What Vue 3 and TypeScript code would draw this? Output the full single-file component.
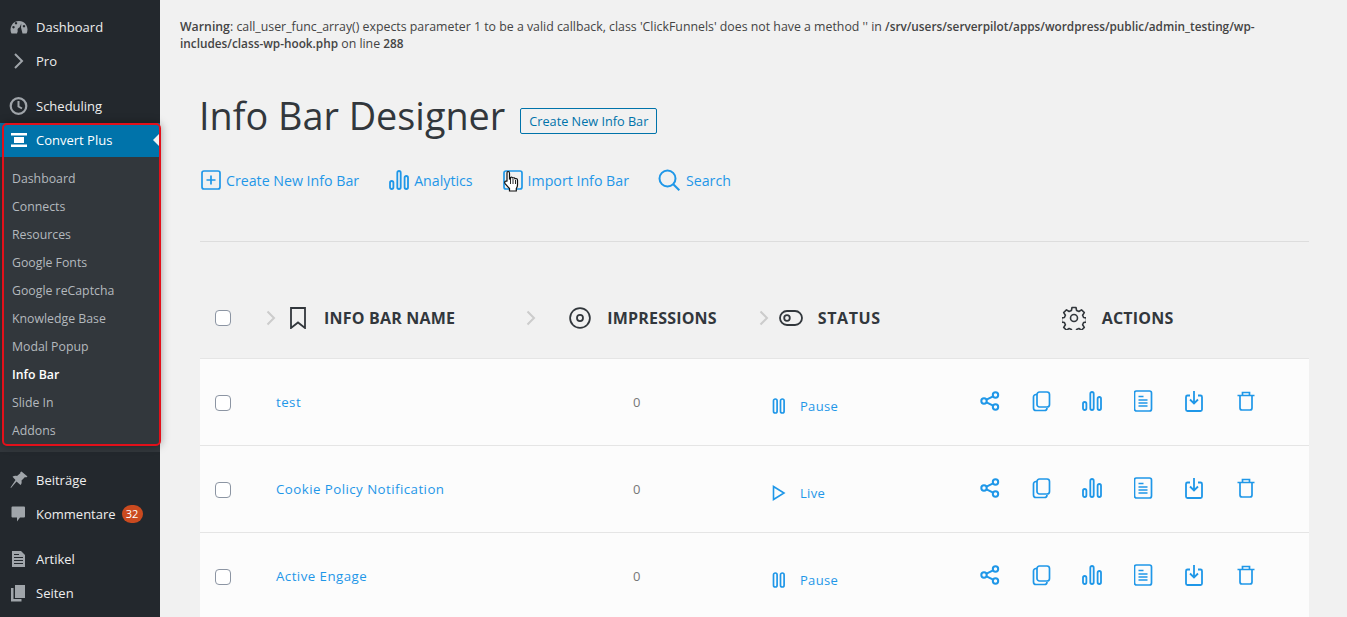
<template>
  <div class="page">
    <svg class="sprites" width="0" height="0">
      <symbol id="i-share" viewBox="0 0 20 20"><g fill="none" stroke="currentColor" stroke-width="2"><circle cx="4" cy="10" r="2.7"/><circle cx="15.5" cy="4" r="2.7"/><circle cx="15.5" cy="16" r="2.7"/><path d="M6.5 8.7l6.6-3.4M6.5 11.3l6.6 3.4"/></g></symbol>
      <symbol id="i-copy" viewBox="0 0 20 22"><g fill="none" stroke="currentColor" stroke-width="1.7"><rect x="6" y="2" width="12.5" height="15" rx="2.5"/><path d="M6 4.500H5A2.500 2.500 0 0 0 2.500 7V18A2.500 2.500 0 0 0 5 20.500H13.500a2.500 2.500 0 0 0 2.500-2.500"/></g></symbol>
      <symbol id="i-bars" viewBox="0 0 20 20"><g fill="none" stroke="currentColor" stroke-width="1.8"><rect x="1" y="11" width="3.400" height="8" rx="1.700"/><rect x="8.300" y="1" width="3.400" height="18" rx="1.700"/><rect x="15.600" y="6" width="3.400" height="13" rx="1.700"/></g></symbol>
      <symbol id="i-doc" viewBox="0 0 20 22"><g fill="none" stroke="currentColor" stroke-width="1.700"><rect x="0.500" y="1" width="17" height="20" rx="2"/><path d="M4.500 6.500h5M4.500 10h9M4.500 13h9M4.500 16h9"/></g></symbol>
      <symbol id="i-down" viewBox="0 0 20 22"><g fill="none" stroke="currentColor" stroke-width="1.800"><path d="M5 5.500H2.500A1.500 1.500 0 0 0 1 7v12.500A1.500 1.500 0 0 0 2.500 21h13a1.500 1.500 0 0 0 1.500-1.500V7a1.500 1.500 0 0 0-1.500-1.500H13"/><path d="M9 1v12M5 9.500l4 4 4-4"/></g></symbol>
      <symbol id="i-trash" viewBox="0 0 20 20"><g fill="none" stroke="currentColor" stroke-width="1.700"><path d="M1.500 4.500h17M6.500 4.500V1.500h7v3"/><path d="M4 4.500V17a2 2 0 0 0 2 2h8a2 2 0 0 0 2-2V4.500"/></g></symbol>
      <symbol id="i-pause" viewBox="0 0 14 16"><g fill="none" stroke="currentColor" stroke-width="1.700"><rect x="1.500" y="1" width="3.600" height="14" rx="1.800"/><rect x="8.500" y="1" width="3.600" height="14" rx="1.800"/></g></symbol>
      <symbol id="i-play" viewBox="0 0 14 16"><path d="M1.500 1.500v13L12 8z" fill="none" stroke="currentColor" stroke-width="1.600"/></symbol>
      <symbol id="i-chev" viewBox="0 0 10 16"><path d="M1.500 1.500L8 8l-6.500 6.500" fill="none" stroke="currentColor" stroke-width="2"/></symbol>
    </svg>

    <aside class="sidebar">
      <ul class="menu">
        <li v-for="item in topMenu" :key="item.label" class="menu-item" :class="item.cls">
          <svg class="menu-icon" viewBox="0 0 20 20" v-html="item.icon"></svg>
          <span>{{ item.label }}</span>
          <span v-if="item.badge" class="badge">{{ item.badge }}</span>
        </li>
      </ul>
      <div class="current">
        <svg class="menu-icon white" viewBox="0 0 20 20"><path d="M2 3h16v2.500H2zM5 7h10v6H5zM2 14.500h16V17H2z" fill="currentColor"/></svg>
        <span>Convert Plus</span>
      </div>
      <ul class="submenu">
        <li v-for="sub in subMenu" :key="sub" :class="{ on: sub === 'Info Bar' }">{{ sub }}</li>
      </ul>
      <ul class="menu lower">
        <li v-for="item in lowerMenu" :key="item.label" class="menu-item" :class="item.cls">
          <svg class="menu-icon" viewBox="0 0 20 20" v-html="item.icon"></svg>
          <span>{{ item.label }}</span>
          <span v-if="item.badge" class="badge">{{ item.badge }}</span>
        </li>
      </ul>
      <div class="highlight"></div>
    </aside>

    <main class="content">
      <p class="warning"><b class="w-label">Warning</b>: call_user_func_array() expects parameter 1 to be a valid callback, class 'ClickFunnels' does not have a method '' in <b>/srv/users/serverpilot/apps/wordpress/public/admin_testing/wp-includes/class-wp-hook.php</b> on line <b>288</b></p>

      <div class="wrap">
        <div class="title-row">
          <h1>Info Bar Designer</h1>
          <a class="title-btn">Create New Info Bar</a>
        </div>

        <nav class="tabs">
          <a class="tab first">
            <svg class="tab-icon" viewBox="0 0 20 20"><g fill="none" stroke="currentColor" stroke-width="1.700"><rect x="1" y="1" width="18" height="18" rx="2"/><path d="M10 5.500v9M5.500 10h9"/></g></svg>
            Create New Info Bar
          </a>
          <a class="tab second">
            <svg class="tab-icon bars"><use href="#i-bars"/></svg>
            Analytics
          </a>
          <a class="tab third">
            <span class="cursor-wrap">
              <svg class="tab-icon" viewBox="0 0 20 20"><rect x="1" y="1" width="18" height="18" rx="2" fill="none" stroke="currentColor" stroke-width="1.700"/></svg>
              <svg class="cursor" viewBox="0 0 18 22"><path d="M5 1.500c1 0 1.500.7 1.500 1.700V9l1-.3V7.500c1-.6 2-.3 2.300.5 1-.5 2-.2 2.300.7 1.200-.4 2.400.3 2.400 1.500v4.800c0 1.500-.5 2.500-1.200 3.500v2.500H6.500V18.500L2.300 13.800c-.8-1-.6-2 0-2.500.7-.5 1.500-.2 1.700.2V3.200c0-1 .3-1.700 1-1.700z" fill="#fff" stroke="#111" stroke-width="1.200"/><path d="M7.500 9v5M10 9v5M12.500 10v4" stroke="#111" stroke-width=".9"/></svg>
            </span>
            Import Info Bar
          </a>
          <a class="tab fourth">
            <svg class="tab-icon search" viewBox="0 0 22 22"><g fill="none" stroke="currentColor" stroke-width="2"><circle cx="9.500" cy="9.500" r="8"/><path d="M15.300 15.300l6 6"/></g></svg>
            Search
          </a>
        </nav>

        <hr class="rule" />

        <div class="table-head">
          <span class="box"></span>
          <svg class="chev c1"><use href="#i-chev"/></svg>
          <svg class="head-icon bookmark" viewBox="0 0 16 22"><path d="M1 1h14v20l-7-5.500L1 21z" fill="none" stroke="currentColor" stroke-width="1.800"/></svg>
          <span class="head-label l1">INFO BAR NAME</span>
          <svg class="chev c2"><use href="#i-chev"/></svg>
          <svg class="head-icon ring" viewBox="0 0 24 24"><g fill="none" stroke="currentColor" stroke-width="1.900"><circle cx="12" cy="12" r="10.800"/><circle cx="12" cy="12" r="3.300"/></g></svg>
          <span class="head-label l2">IMPRESSIONS</span>
          <svg class="chev c3"><use href="#i-chev"/></svg>
          <svg class="head-icon toggle" viewBox="0 0 24 16"><g fill="none" stroke="currentColor" stroke-width="1.800"><rect x="1" y="1" width="22" height="14" rx="7"/><circle cx="8" cy="8" r="2.800"/></g></svg>
          <span class="head-label l3">STATUS</span>
          <svg class="head-icon gear" viewBox="0 0 24 24"><g fill="none" stroke="currentColor" stroke-width="1.600" stroke-linejoin="round"><circle cx="12" cy="12" r="3.500"/><path d="M10 1.500h4l.6 3 2.300 1 2.600-1.700 2.800 2.800-1.700 2.600 1 2.300 2.900.5v4l-2.900.5-1 2.300 1.700 2.600-2.800 2.800-2.600-1.700-2.300 1-.6 3h-4l-.6-3-2.300-1-2.600 1.700-2.800-2.800 1.700-2.600-1-2.300-2.900-.5v-4l2.900-.5 1-2.300-1.700-2.600 2.800-2.800 2.600 1.700 2.300-1z"/></g></svg>
          <span class="head-label l4">ACTIONS</span>
        </div>

        <div v-for="row in rows" :key="row.name" class="row">
          <span class="box"></span>
          <a class="row-name">{{ row.name }}</a>
          <span class="row-count">0</span>
          <span class="row-status">
            <svg class="status-icon"><use :href="row.live ? '#i-play' : '#i-pause'"/></svg>
            {{ row.live ? 'Live' : 'Pause' }}
          </span>
          <span class="row-actions">
            <svg v-for="a in actions" :key="a" class="action"><use :href="'#i-' + a"/></svg>
          </span>
        </div>
      </div>
    </main>
  </div>
</template>

<script setup lang="ts">
interface MenuItem {
  label: string;
  icon: string;
  cls?: string;
  badge?: string;
}

const topMenu: MenuItem[] = [
  {
    label: 'Dashboard',
    icon: '<path fill="currentColor" fill-rule="evenodd" d="M2.500 16.500A8.500 8.500 0 1 1 17.500 16.500H13.500L12 10.500l.3-4-1.800 4A2.500 2.500 0 0 0 8.800 14L8 16.500zM4.500 9a1.200 1.200 0 1 0 .01 0zM7 5a1.200 1.200 0 1 0 .01 0zM15 8a1.200 1.200 0 1 0 .01 0z"/>',
  },
  {
    label: 'Pro',
    cls: 'gap',
    icon: '<path fill="none" stroke="currentColor" stroke-width="2" d="M6 3l7 7-7 7"/>',
  },
  {
    label: 'Scheduling',
    icon: '<circle cx="9.500" cy="10" r="7.800" fill="none" stroke="currentColor" stroke-width="2.200"/><path fill="none" stroke="currentColor" stroke-width="2" d="M9.500 5v5.500l3.500 2"/>',
  },
];

const subMenu: string[] = [
  'Dashboard',
  'Connects',
  'Resources',
  'Google Fonts',
  'Google reCaptcha',
  'Knowledge Base',
  'Modal Popup',
  'Info Bar',
  'Slide In',
  'Addons',
];

const lowerMenu: MenuItem[] = [
  {
    label: 'Beiträge',
    icon: '<path fill="currentColor" d="M12.500 1.500l6 5-1.500 1-1-.5-3.500 3.500c.5 2 0 3.500-1 4.500L7.500 11.500 2 18l-.5-.5L6.500 10 3.500 6.800c1.200-1 2.800-1.300 4.500-.8L11.500 3l-.3-.7z"/>',
  },
  {
    label: 'Kommentare',
    cls: 'gap',
    badge: '32',
    icon: '<path fill="currentColor" d="M3.500 2.500h11.500a1 1 0 0 1 1 1v9a1 1 0 0 1-1 1h-4l-3 4v-4H3.500a1 1 0 0 1-1-1v-9a1 1 0 0 1 1-1z"/>',
  },
  {
    label: 'Artikel',
    icon: '<path fill="currentColor" fill-rule="evenodd" d="M3 2h9l4 4v12H3zM5 5v1h5V5zM5 8v1h9V8zM5 11v1h9v-1zM5 14v1h9v-1z"/>',
  },
  {
    label: 'Seiten',
    icon: '<path fill="currentColor" d="M6 2h10v13H6zM2 5h2.500v11h8v2.500H2z"/>',
  },
];

const rows = [
  { name: 'test', live: false },
  { name: 'Cookie Policy Notification', live: true },
  { name: 'Active Engage', live: false },
];

const actions: string[] = ['share', 'copy', 'bars', 'doc', 'down', 'trash'];
</script>

<style>
html,
body {
  margin: 0;
  height: 617px;
  overflow: hidden;
  background: #f1f1f1;
}
</style>

<style scoped>
.page {
  display: flex;
  height: 617px;
  overflow: hidden;
  font-family: "Open Sans", "Liberation Sans", sans-serif;
  color: #444;
  background: #f1f1f1;
}

.sprites {
  position: absolute;
}

.sidebar {
  position: relative;
  flex: 0 0 160px;
  background: #23282d;
  color: #eee;
  font-size: 13px;
}

.menu,
.submenu {
  list-style: none;
  margin: 0;
  padding: 0;
}

.menu {
  padding-top: 10px;
}

.menu.lower {
  padding-top: 11px;
}

.menu-item {
  display: flex;
  align-items: center;
  height: 34px;
  padding-left: 9px;
}

.menu-item.gap {
  margin-bottom: 11px;
}

.menu-icon {
  width: 20px;
  height: 20px;
  margin-right: 7px;
  color: #a0a5aa;
  flex: none;
}

.menu-icon.white {
  color: #fff;
}

.badge {
  margin-left: 6px;
  width: 21px;
  height: 18px;
  border-radius: 9px;
  background: #ca4a1f;
  color: #fff;
  font-size: 11px;
  line-height: 18px;
  text-align: center;
}

.current {
  position: relative;
  display: flex;
  align-items: center;
  height: 34px;
  padding-left: 9px;
  background: #0073aa;
  color: #fff;
  font-size: 13px;
}

.current::after {
  content: "";
  position: absolute;
  right: 0;
  top: 10px;
  border: 7px solid transparent;
  border-left: 0;
  border-right-color: #f1f1f1;
}

.submenu {
  background: #32373c;
  padding: 8px 0 7px;
  height: 280px;
  box-sizing: content-box;
  color: #b4b9be;
  font-size: 12.300px;
}

.submenu li {
  height: 28px;
  line-height: 28px;
  padding-left: 12px;
}

.submenu li.on {
  color: #fff;
  font-weight: 600;
}

.highlight {
  position: absolute;
  left: 2px;
  top: 123px;
  width: 155px;
  height: 319px;
  border: 2px solid #e3101a;
  border-radius: 5px;
  box-shadow: 0 0 8px rgba(0, 0, 0, 0.35);
}

.content {
  flex: 1;
  min-width: 0;
  padding: 18px 38px 0 20px;
}

.warning {
  margin: 0;
  font-size: 12.330px;
  line-height: 17px;
  color: #444;
}

.warning b {
  font-size: 11.800px;
  font-weight: 600;
}

.warning .w-label {
  font-size: 12.300px;
}

.wrap {
  margin-left: 19px;
}

.title-row {
  display: flex;
  align-items: center;
  margin-top: 34px;
  height: 60px;
}

h1 {
  margin: 0;
  font-size: 37.800px;
  font-weight: 400;
  color: #32373c;
  line-height: 60px;
}

.title-btn {
  margin: 10px 0 0 15px;
  height: 24px;
  padding: 0 8px;
  line-height: 24px;
  font-size: 12.700px;
  color: #0073aa;
  border: 1px solid #0073aa;
  border-radius: 2px;
}

.tabs {
  display: flex;
  align-items: center;
  margin-top: 19px;
  height: 30px;
}

.tab {
  display: flex;
  align-items: center;
  gap: 5px;
  font-size: 14.200px;
  color: #1f97e8;
}

.tab.first {
  margin-left: 2px;
}

.tab.second {
  margin-left: 30px;
}

.tab.third {
  margin-left: 30px;
}

.tab.fourth {
  margin-left: 29px;
  gap: 6px;
}

.tab-icon {
  width: 20px;
  height: 20px;
  flex: none;
}

.tab-icon.search {
  width: 22px;
  height: 22px;
}

.cursor-wrap {
  position: relative;
  display: flex;
}

.cursor {
  position: absolute;
  left: 0;
  top: 0;
  width: 18px;
  height: 22px;
}

.rule {
  margin: 46px 0 0 1px;
  border: 0;
  border-top: 1px solid #ddd;
}

.table-head {
  display: flex;
  align-items: center;
  height: 117px;
  margin-left: 1px;
  padding: 35px 0 0 15px;
  border-bottom: 1px solid #e5e5e5;
  box-sizing: border-box;
  color: #32373c;
}

.box {
  flex: none;
  width: 14px;
  height: 14px;
  background: #fff;
  border: 1px solid #8c95a3;
  border-radius: 4px;
}

.chev {
  flex: none;
  width: 10px;
  height: 16px;
  color: #ccc;
}

.c1 {
  margin-left: 35px;
}

.c2 {
  margin-left: 71px;
}

.c3 {
  margin-left: 42px;
}

.head-icon {
  flex: none;
}

.bookmark {
  width: 16px;
  height: 22px;
  margin-left: 14px;
}

.ring {
  width: 22px;
  height: 22px;
  margin-left: 33px;
}

.toggle {
  width: 24px;
  height: 16px;
  margin-left: 10px;
}

.gear {
  width: 24px;
  height: 24px;
  margin-left: 181px;
}

.head-label {
  flex: none;
  font-size: 16px;
  font-weight: 700;
  letter-spacing: 0.2px;
}

.l1 {
  margin-left: 18px;
}

.l2 {
  margin-left: 16px;
}

.l3 {
  margin-left: 15px;
  letter-spacing: 0.6px;
}

.l4 {
  margin-left: 16px;
}

.row {
  display: flex;
  align-items: center;
  height: 87px;
  margin-left: 1px;
  padding-left: 15px;
  box-sizing: border-box;
  background: #fcfcfc;
  border-bottom: 1px solid #e5e5e5;
  font-size: 13px;
  letter-spacing: 0.4px;
}

.row .box {
  margin-top: 2px;
}

.row-name {
  flex: none;
  width: 357px;
  margin-left: 45px;
  font-size: 13.300px;
  letter-spacing: 0.45px;
  color: #1f97e8;
}

.row-count {
  flex: none;
  width: 10px;
  color: #777;
}

.row-status {
  flex: none;
  display: flex;
  align-items: center;
  gap: 14px;
  width: 208px;
  margin-left: 129px;
  padding-top: 8px;
  letter-spacing: 0.3px;
  color: #1f97e8;
}

.status-icon {
  width: 14px;
  height: 16px;
  flex: none;
}

.row-actions {
  display: flex;
  gap: 31.200px;
  color: #1f97e8;
  margin-top: -2px;
}

.action {
  width: 20px;
  height: 22px;
}
</style>
